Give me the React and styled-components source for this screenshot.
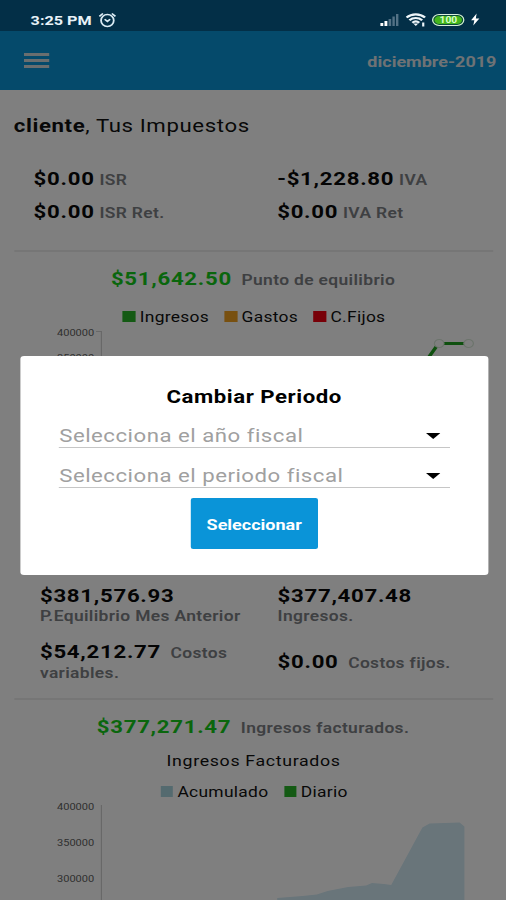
import React from 'react';
import styled, {createGlobalStyle} from "styled-components";

const App = () => {
    return (
        <>
            <GlobalStyle/>
            <Screen>
                <StatusBar>
                    <Clock>3:25 PM</Clock>
                    <AlarmIcon/>
                    <StatusIcons>
                        <SignalIcon/>
                        <WifiIcon/>
                        <Battery>100</Battery>
                        <BoltIcon/>
                    </StatusIcons>
                </StatusBar>
                <Header>
                    <Burger><i/><i/><i/></Burger>
                    <Period>diciembre-2019</Period>
                </Header>

                <Greeting><b>cliente</b>, Tus Impuestos</Greeting>
                <TaxGrid>
                    <Line><Amount>$0.00</Amount><Label>ISR</Label></Line>
                    <Line><Amount>-$1,228.80</Amount><Label>IVA</Label></Line>
                    <Line><Amount>$0.00</Amount><Label>ISR Ret.</Label></Line>
                    <Line><Amount>$0.00</Amount><Label>IVA Ret</Label></Line>
                </TaxGrid>
                <Divider/>

                <SectionTitle>
                    <Amount $green>$51,642.50</Amount>
                    <Label $gap={8}>Punto de equilibrio</Label>
                </SectionTitle>
                <Legend>
                    <LegendItem $color="#28b428">Ingresos</LegendItem>
                    <LegendItem $color="#f0a020">Gastos</LegendItem>
                    <LegendItem $color="#f00010">C.Fijos</LegendItem>
                </Legend>
                <BalanceChart/>

                <TotalsGrid>
                    <Total>
                        <Amount>$381,576.93</Amount>
                        <Label $block>P.Equilibrio Mes Anterior</Label>
                    </Total>
                    <Total>
                        <Amount>$377,407.48</Amount>
                        <Label $block>Ingresos.</Label>
                    </Total>
                    <Total>
                        <Amount>$54,212.77</Amount>
                        <Label $gap={8}>Costos</Label>
                        <Label $block>variables.</Label>
                    </Total>
                    <Total $center>
                        <Amount>$0.00</Amount>
                        <Label $gap={8}>Costos fijos.</Label>
                    </Total>
                </TotalsGrid>
                <Divider/>

                <SectionTitle>
                    <Amount $green>$377,271.47</Amount>
                    <Label $gap={8}>Ingresos facturados.</Label>
                </SectionTitle>
                <ChartTitle>Ingresos Facturados</ChartTitle>
                <Legend>
                    <LegendItem $color="#a8d4de">Acumulado</LegendItem>
                    <LegendItem $color="#28b428">Diario</LegendItem>
                </Legend>
                <InvoicedChart/>

                <Backdrop>
                    <Modal>
                        <ModalTitle>Cambiar Periodo</ModalTitle>
                        <Select>Selecciona el año fiscal<Caret/></Select>
                        <Select>Selecciona el periodo fiscal<Caret/></Select>
                        <Button>Seleccionar</Button>
                    </Modal>
                </Backdrop>
            </Screen>
        </>
    );
};

export default App;

const AlarmIcon = () => (
    <svg width="15" height="16" viewBox="0 0 15 16" fill="none" stroke="#dcecf5" strokeWidth="1.5">
        <ellipse cx="7.5" cy="8.5" rx="5.3" ry="5.9"/>
        <path d="M5.2 7.2l2.3 2.2 2.3-2.2M.8 4.4l3-2.9M14.2 4.4l-3-2.9"/>
    </svg>
)

const SignalIcon = () => (
    <svg width="17" height="13" viewBox="0 0 17 13">
        <path fill="#fff" d="M1 10h2.4v3H1zM4.4 8h2.4v5H4.4z"/>
        <path fill="#537286" d="M7.8 6h2.2v7H7.8zM11 3.4h2v9.6h-2zM14 1h2v12h-2z"/>
    </svg>
)

const WifiIcon = () => (
    <svg width="17" height="14" viewBox="0 0 17 14" fill="none" stroke="#eef6fa" strokeWidth="2.1">
        <path d="M.8 4.6C5 .3 12 .3 16.2 4.6M3.2 7.2c3-2.9 7.6-2.9 10.6 0M5.6 9.7c1.7-1.5 4.1-1.5 5.8 0"/>
        <path fill="#eef6fa" stroke="none" d="M6.4 10.6h4.2L8.5 13zM13.8 9.6h1.8v4h-1.8z"/>
    </svg>
)

const BoltIcon = () => (
    <svg width="8" height="13" viewBox="0 0 8 13">
        <path fill="#fff" d="M5.2 .6L.6 7.3h2.7L2.4 12.4 7.5 5.4H4.5z"/>
    </svg>
)

const Caret = () => (
    <svg width="12" height="6" viewBox="0 0 12 6">
        <path fill="#000" d="M0 0h12L6 6z"/>
    </svg>
)

const BalanceChart = () => (
    <Chart $height={255}>
        <path stroke="#d0d0d0" d="M80 5.5h4.5V230"/>
        <Tick x="78.5" y="9.8">400000</Tick>
        <Tick x="78.5" y="35.3">350000</Tick>
        <path stroke="#1fa01f" strokeWidth="3" fill="none" d="M340 60L365.5 17.5H390"/>
        <circle cx="366" cy="17.5" r="4" fill="#fff" stroke="#d8e8d8"/>
        <circle cx="390.5" cy="17.5" r="4" fill="#fff" stroke="#d8e8d8"/>
    </Chart>
)

const InvoicedChart = () => (
    <Chart $height={100}>
        <path stroke="#d0d0d0" d="M84.5 4V100"/>
        <Tick x="78.5" y="9.3">400000</Tick>
        <Tick x="78.5" y="45.3">350000</Tick>
        <Tick x="78.5" y="81.3">300000</Tick>
        <path
            fill="#d2eaf5"
            d="M231 100V97L252 95 264 93.5 273 90 290 86 305 84.5 310 82 320 83 326 84 352 26.5 358 22.5 383 21.5 387 25.5V100z"
        />
    </Chart>
)

const GlobalStyle = createGlobalStyle`
  body {
    margin: 0;
    background: #fff;
    overflow: hidden;
  }
`

// the whole screen is stretched horizontally, widths below are before the stretch
const Screen = styled.div`
  position: relative;
  box-sizing: border-box;
  width: 421.667px;
  height: 900px;
  overflow: hidden;
  transform: scaleX(1.2);
  transform-origin: 0 0;
  background: #fff;
  color: #101010;
  font-family: Roboto, "Liberation Sans", sans-serif;
`

const StatusBar = styled.div`
  position: relative;
  z-index: 2;
  display: flex;
  align-items: center;
  box-sizing: border-box;
  height: 31px;
  padding: 8px 21.5px 0 25.5px;
  background: #032f47;
`

const Clock = styled.div`
  margin-right: 5.5px;
  font-size: 13.5px;
  line-height: 20px;
  font-weight: 700;
  color: #e8f2f8;
`

const StatusIcons = styled.div`
  display: flex;
  align-items: center;
  gap: 5px;
  margin-left: auto;
`

const Battery = styled.div`
  box-sizing: border-box;
  width: 27px;
  height: 12px;
  border: 1.5px solid #d9efdc;
  border-radius: 6px;
  background: #43b51c;
  box-shadow: inset 0 0 0 1px #0b4a3a;
  color: #d8ffc8;
  font-size: 8.5px;
  line-height: 10px;
  font-weight: 700;
  text-align: center;
`

const Header = styled.div`
  display: flex;
  align-items: center;
  justify-content: space-between;
  height: 59px;
  padding: 0 8px 0 20px;
  background: #0a94d6;
`

const Burger = styled.div`
  display: flex;
  flex-direction: column;
  gap: 3px;
  width: 20.5px;

  i {
    height: 3px;
    background: #d4dcde;
  }
`

const Period = styled.div`
  padding-top: 2px;
  font-size: 15px;
  font-weight: 700;
  color: #dfe5ea;
`

const Greeting = styled.div`
  height: 70px;
  padding-left: 11.5px;
  font-size: 18.5px;
  line-height: 72px;
  letter-spacing: .5px;
`

const TaxGrid = styled.div`
  display: grid;
  grid-template-columns: 203px 1fr;
  grid-auto-rows: 33px;
  height: 87px;
  padding: 3px 0 0 28px;
`

const Line = styled.div`
  line-height: 33px;
  white-space: nowrap;
`

const Amount = styled.span`
  font-size: 18.5px;
  font-weight: 700;
  letter-spacing: .6px;
  color: ${({$green}) => $green ? '#14cc1a' : '#080808'};
`

const Label = styled.span`
  display: ${({$block}) => $block ? 'block' : 'inline'};
  margin-left: ${({$gap, $block}) => $block ? 0 : $gap || 4}px;
  font-size: 14.5px;
  font-weight: 600;
  letter-spacing: .3px;
  color: #7c8084;
`

const Divider = styled.div`
  height: 2px;
  margin: 0 11px 0 12px;
  background: #ececec;
`

const SectionTitle = styled.div`
  height: 54px;
  line-height: 54px;
  text-align: center;
`

const Legend = styled.div`
  display: flex;
  justify-content: center;
  gap: 13px;
  height: 20px;
  padding-left: 2px;
`

const LegendItem = styled.div`
  display: flex;
  align-items: center;
  gap: 3.5px;
  padding-top: 2px;
  font-size: 14.5px;
  letter-spacing: .25px;

  &::before {
    content: '';
    width: 10.5px;
    height: 11px;
    margin-top: -2px;
    background: ${({$color}) => $color};
  }
`

const Chart = styled.svg.attrs({fill: 'none'})`
  display: block;
  width: 100%;
  height: ${({$height}) => $height}px;
`

const Tick = styled.text`
  font-size: 9.2px;
  text-anchor: end;
  fill: #606060;
`

const TotalsGrid = styled.div`
  display: grid;
  grid-template-columns: 198px 1fr;
  grid-template-rows: 56px 61px;
  padding-left: 33.3px;
`

const Total = styled.div`
  padding-top: ${({$center}) => $center ? 15 : 5}px;
  line-height: 20px;
`

const ChartTitle = styled.div`
  height: 27px;
  padding-left: 1px;
  font-size: 14.8px;
  line-height: 14px;
  letter-spacing: .55px;
  text-align: center;
`

const Backdrop = styled.div`
  position: absolute;
  inset: 0;
  z-index: 1;
  display: flex;
  align-items: flex-start;
  justify-content: center;
  padding: 356px 0 0 2px;
  background: rgba(0, 0, 0, .5);
`

const Modal = styled.div`
  display: flex;
  flex-direction: column;
  align-items: center;
  box-sizing: border-box;
  width: 390px;
  height: 219px;
  padding: 26px 32px 0;
  border-radius: 3px;
  background: #fff;
`

const ModalTitle = styled.div`
  height: 26px;
  font-size: 18.5px;
  line-height: 30px;
  font-weight: 700;
  letter-spacing: .45px;
  color: #000;
`

const Select = styled.div`
  display: flex;
  align-items: center;
  justify-content: space-between;
  box-sizing: border-box;
  width: 100%;
  height: 40px;
  padding: 16px 8px 0 .5px;
  border-bottom: 1.5px solid #c6c6c6;
  font-size: 18.5px;
  letter-spacing: .42px;
  color: #a0a0a0;
`

const Button = styled.button`
  width: 106px;
  height: 51px;
  margin-top: 10px;
  padding: 2px 0 0;
  border: 0;
  border-radius: 2px;
  background: #0a94d8;
  color: #fff;
  font: 700 15px Roboto, "Liberation Sans", sans-serif;
`
